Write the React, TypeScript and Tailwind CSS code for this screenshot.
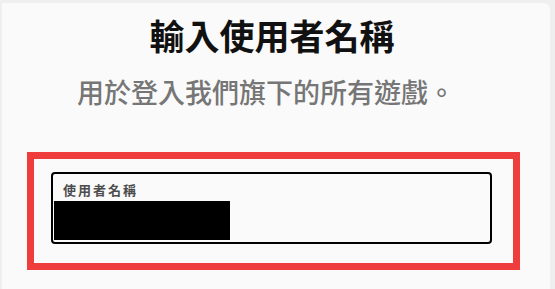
import React from "react";

// Username step: title, subtitle and a highlighted input field.

export default function App() {
  return (
    <div
      className="min-h-[289px] w-[555px] overflow-hidden bg-[#efefef] pl-[2px] pt-[3px]"
      style={{ fontFamily: '"Noto Sans CJK TC", "Noto Sans", sans-serif' }}
    >
      <div className="h-[286px] w-[548px] rounded-tr-[6px] bg-[#fafafa] pt-[9px]">
        <h1 className="pr-[8px] text-center text-[35px] font-bold leading-[46px] text-[#111]">
          輸入使用者名稱
        </h1>
        <p className="mt-[16px] pr-[20px] text-center text-[27px] font-medium leading-[36px] text-[#767676]">
          用於登入我們旗下的所有遊戲。
        </p>

        <div className="ml-[25px] mt-[42px] w-[493px] border-[7px] border-[#ef3d3d] pb-[19px] pl-[17px] pr-[21px] pt-[13px]">
          <div className="h-[72px] w-[441px] rounded-[4px] border-2 border-black px-px pt-[7px]">
            <div className="pl-[9px] text-[13px] font-bold leading-[17px] tracking-[2px] text-[#4d4d4d]">
              使用者名稱
            </div>
            <div className="mt-[3px] h-[39px] w-[176px] bg-black" />
          </div>
        </div>
      </div>
    </div>
  );
}
